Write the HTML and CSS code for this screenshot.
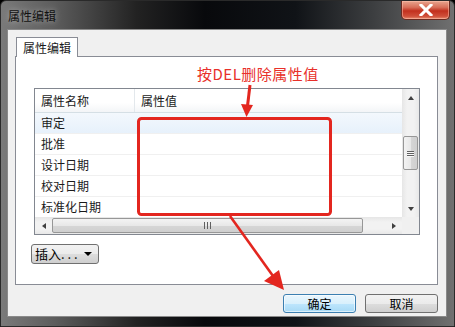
FILE: index.html
```html
<!DOCTYPE html>
<html lang="zh-CN">
<head>
    <meta charset="UTF-8">
    <title>属性编辑</title>
    <link rel="stylesheet" href="styles.css">
</head>
<body>
    <div class="window">
        <div class="titlebar">
            <span class="title">属性编辑</span>
            <div class="close-btn">
                <svg width="16" height="12" viewBox="0 0 16 12">
                    <path d="M3 1 L13 11 M13 1 L3 11" stroke="#ffffff" stroke-width="3" stroke-linecap="square"/>
                </svg>
            </div>
        </div>

        <div class="client">
            <div class="tabs">
                <div class="tab">属性编辑</div>
            </div>
            <div class="panel">
                <div class="hint">按DEL删除属性值</div>

                <div class="list">
                    <div class="list-main">
                        <div class="list-body">
                            <div class="list-head">
                                <div class="col col-name">属性名称</div>
                                <div class="col col-value">属性值</div>
                            </div>
                            <div class="list-rows">
                                <div class="row row-hot"><div class="col col-name">审定</div><div class="col col-value"></div></div>
                                <div class="row"><div class="col col-name">批准</div><div class="col col-value"></div></div>
                                <div class="row"><div class="col col-name">设计日期</div><div class="col col-value"></div></div>
                                <div class="row"><div class="col col-name">校对日期</div><div class="col col-value"></div></div>
                                <div class="row"><div class="col col-name">标准化日期</div><div class="col col-value"></div></div>
                            </div>
                        </div>
                        <div class="vscroll">
                            <div class="sb-btn"><span class="tri tri-up"></span></div>
                            <div class="sb-track sb-track-top"></div>
                            <div class="vthumb">
                                <span></span><span></span><span></span>
                            </div>
                            <div class="sb-track"></div>
                            <div class="sb-btn"><span class="tri tri-down"></span></div>
                        </div>
                    </div>
                    <div class="list-bottom">
                        <div class="hscroll">
                            <div class="sb-btn-h"><span class="tri tri-left"></span></div>
                            <div class="hthumb">
                                <span></span><span></span><span></span>
                            </div>
                            <div class="sb-track-h"></div>
                            <div class="sb-btn-h"><span class="tri tri-right"></span></div>
                        </div>
                        <div class="corner"></div>
                    </div>
                </div>

                <div class="drop-btn">
                    <span>插入. . .</span>
                    <span class="tri tri-down-big"></span>
                </div>
            </div>

            <div class="actions">
                <div class="btn btn-default">确定</div>
                <div class="btn">取消</div>
            </div>
        </div>

        <!-- annotation layer -->
        <svg class="marks" width="455" height="327" viewBox="0 0 455 327">
            <rect x="138.5" y="118.5" width="192" height="96" rx="3" fill="none" stroke="#e3261f" stroke-width="3"/>
            <path d="M250 85 L247.5 106" stroke="#e3261f" stroke-width="3"/>
            <polygon points="241,104 253,105 246.5,117" fill="#e3261f"/>
            <path d="M230 216 L273 276" stroke="#e3261f" stroke-width="2.6"/>
            <polygon points="264,281 279,270 284,290" fill="#e3261f"/>
        </svg>
    </div>
</body>
</html>
```

FILE: styles.css
```css
html, body {
    margin: 0;
    padding: 0;
}

body {
    width: 455px;
    height: 327px;
    overflow: hidden;
    background: #000;
    font-family: "Noto Sans CJK SC", "Noto Sans", sans-serif;
    font-size: 12px;
    color: #1a1a1a;
}

.window {
    position: relative;
    width: 455px;
    height: 327px;
    box-sizing: border-box;
    display: flex;
    flex-direction: column;
    border-radius: 6px 6px 0 0;
    background:
        linear-gradient(to right, #7a7a7a 0%, #5c5c5c 12%, #222 30%, #08090c 45%, #101317 65%, #3c3e40 82%, #707070 100%);
    border: 1px solid #2a2a2a;
}

.titlebar {
    height: 28px;
    display: flex;
    align-items: flex-start;
}

.title {
    margin: 8px 0 0 7px;
    font-size: 12px;
    line-height: 14px;
    color: #111;
    text-shadow: 0 0 6px rgba(255, 255, 255, 0.5);
}

.close-btn {
    margin-left: auto;
    margin-right: 4px;
    width: 49px;
    height: 19px;
    box-sizing: border-box;
    border: 1px solid #6a2a20;
    border-top: none;
    border-radius: 0 0 5px 5px;
    background: linear-gradient(#e9a58f 0%, #d8705a 35%, #c2301e 55%, #d0503a 85%, #e88c70 100%);
    display: flex;
    align-items: center;
    justify-content: center;
    box-shadow: inset 0 0 0 1px rgba(255, 200, 180, 0.5);
}

.client {
    flex: 1;
    margin: 0 7px 9px 6px;
    background: #f0f0f0;
    padding: 7px 8px 0 7px;
    border: 1px solid #8a8a8a;
    display: flex;
    flex-direction: column;
}

.tabs {
    display: flex;
    padding-left: 1px;
    position: relative;
    z-index: 1;
    margin-bottom: -1px;
}

.tab {
    width: 62px;
    height: 20px;
    box-sizing: border-box;
    border: 1px solid #898c95;
    border-bottom: none;
    background: #fff;
    line-height: 19px;
    padding-left: 6px;
}

.panel {
    height: 229px;
    box-sizing: border-box;
    border: 1px solid #898c95;
    background: #fff;
    padding: 0 0 0 18px;
}

.hint {
    margin: 7px 0 0 163px;
    height: 20px;
    line-height: 20px;
    font-size: 15px;
    color: #e8302a;
    letter-spacing: 0.5px;
}

.list {
    margin-top: 4px;
    width: 386px;
    height: 147px;
    box-sizing: border-box;
    border: 1px solid #828790;
    display: flex;
    flex-direction: column;
}

.list-main {
    display: flex;
    height: 128px;
}

.list-body {
    flex: 1;
    display: flex;
    flex-direction: column;
}

.list-head {
    height: 24px;
    display: flex;
    box-sizing: border-box;
    border-bottom: 1px solid #d5dfe5;
    background: linear-gradient(#ffffff 0%, #ffffff 60%, #f3f5f7 100%);
}

.list-head .col {
    line-height: 23px;
}

.list-head .col-name {
    border-right: 1px solid #e3e8ec;
}

.col {
    box-sizing: border-box;
    padding-left: 6px;
    white-space: nowrap;
}

.col-name {
    width: 100px;
}

.col-value {
    flex: 1;
}

.list-rows {
    flex: 1;
    overflow: hidden;
}

.row {
    height: 21px;
    display: flex;
    box-sizing: border-box;
    border-bottom: 1px solid #f0f0f0;
    line-height: 20px;
}

.row-hot {
    background: linear-gradient(#f3f8fd, #e7f1fb);
}

.vscroll {
    width: 17px;
    display: flex;
    flex-direction: column;
    background: linear-gradient(to right, #e6e6e6, #f2f2f2 30%, #f2f2f2 70%, #e8e8e8);
}

.sb-btn {
    height: 17px;
    display: flex;
    align-items: center;
    justify-content: center;
}

.sb-track-top {
    height: 30px;
}

.sb-track {
    flex: 1;
}

.vthumb {
    height: 34px;
    margin: 0 1px;
    box-sizing: border-box;
    border: 1px solid #979797;
    border-radius: 2px;
    background: linear-gradient(to right, #f3f3f3, #e8e8e8 50%, #d6d6d6 51%, #cfcfcf);
    display: flex;
    flex-direction: column;
    align-items: center;
    justify-content: center;
    gap: 1px;
}

.vthumb span {
    width: 7px;
    height: 1px;
    background: #606060;
    box-shadow: 0 1px 0 #f8f8f8;
}

.list-bottom {
    height: 17px;
    display: flex;
}

.hscroll {
    flex: 1;
    display: flex;
    background: linear-gradient(#e6e6e6, #f2f2f2 30%, #f2f2f2 70%, #e8e8e8);
}

.sb-btn-h {
    width: 17px;
    display: flex;
    align-items: center;
    justify-content: center;
}

.hthumb {
    width: 311px;
    margin: 1px 0;
    box-sizing: border-box;
    border: 1px solid #979797;
    border-radius: 2px;
    background: linear-gradient(#f3f3f3, #e8e8e8 50%, #d6d6d6 51%, #cfcfcf);
    display: flex;
    align-items: center;
    justify-content: center;
    gap: 2px;
}

.hthumb span {
    width: 1px;
    height: 7px;
    background: #606060;
}

.sb-track-h {
    flex: 1;
}

.corner {
    width: 17px;
    background: #f0f0f0;
}

.tri {
    width: 0;
    height: 0;
    border-style: solid;
}

.tri-up {
    border-width: 0 3.5px 4px 3.5px;
    border-color: transparent transparent #404040 transparent;
}

.tri-down {
    border-width: 4px 3.5px 0 3.5px;
    border-color: #404040 transparent transparent transparent;
}

.tri-left {
    border-width: 3.5px 4px 3.5px 0;
    border-color: transparent #404040 transparent transparent;
}

.tri-right {
    border-width: 3.5px 0 3.5px 4px;
    border-color: transparent transparent transparent #404040;
}

.tri-down-big {
    border-width: 4px 4px 0 4px;
    border-color: #000 transparent transparent transparent;
}

.drop-btn {
    margin: 9px 0 0 -3px;
    width: 68px;
    height: 20px;
    box-sizing: border-box;
    border: 1px solid #707070;
    border-radius: 3px;
    background: linear-gradient(#f2f2f2, #ebebeb 50%, #dddddd 51%, #cfcfcf);
    display: flex;
    align-items: center;
    justify-content: space-between;
    padding: 0 6px 0 3px;
    font-size: 13px;
    line-height: 18px;
    color: #000;
}

.actions {
    display: flex;
    justify-content: flex-end;
    gap: 9px;
    margin-top: 9px;
}

.btn {
    width: 73px;
    height: 19px;
    box-sizing: border-box;
    border: 1px solid #707070;
    border-radius: 3px;
    background: linear-gradient(#f2f2f2, #ebebeb 50%, #dddddd 51%, #cfcfcf);
    text-align: center;
    line-height: 17px;
    color: #000;
}

.btn-default {
    border-color: #3c7fb1;
    background: linear-gradient(#eaf6fd, #d9f0fc 50%, #bee6fd 51%, #a7d9f5);
    box-shadow: inset 0 0 0 1px rgba(255, 255, 255, 0.6);
}

.marks {
    position: absolute;
    left: -1px;
    top: -1px;
    pointer-events: none;
}
```
